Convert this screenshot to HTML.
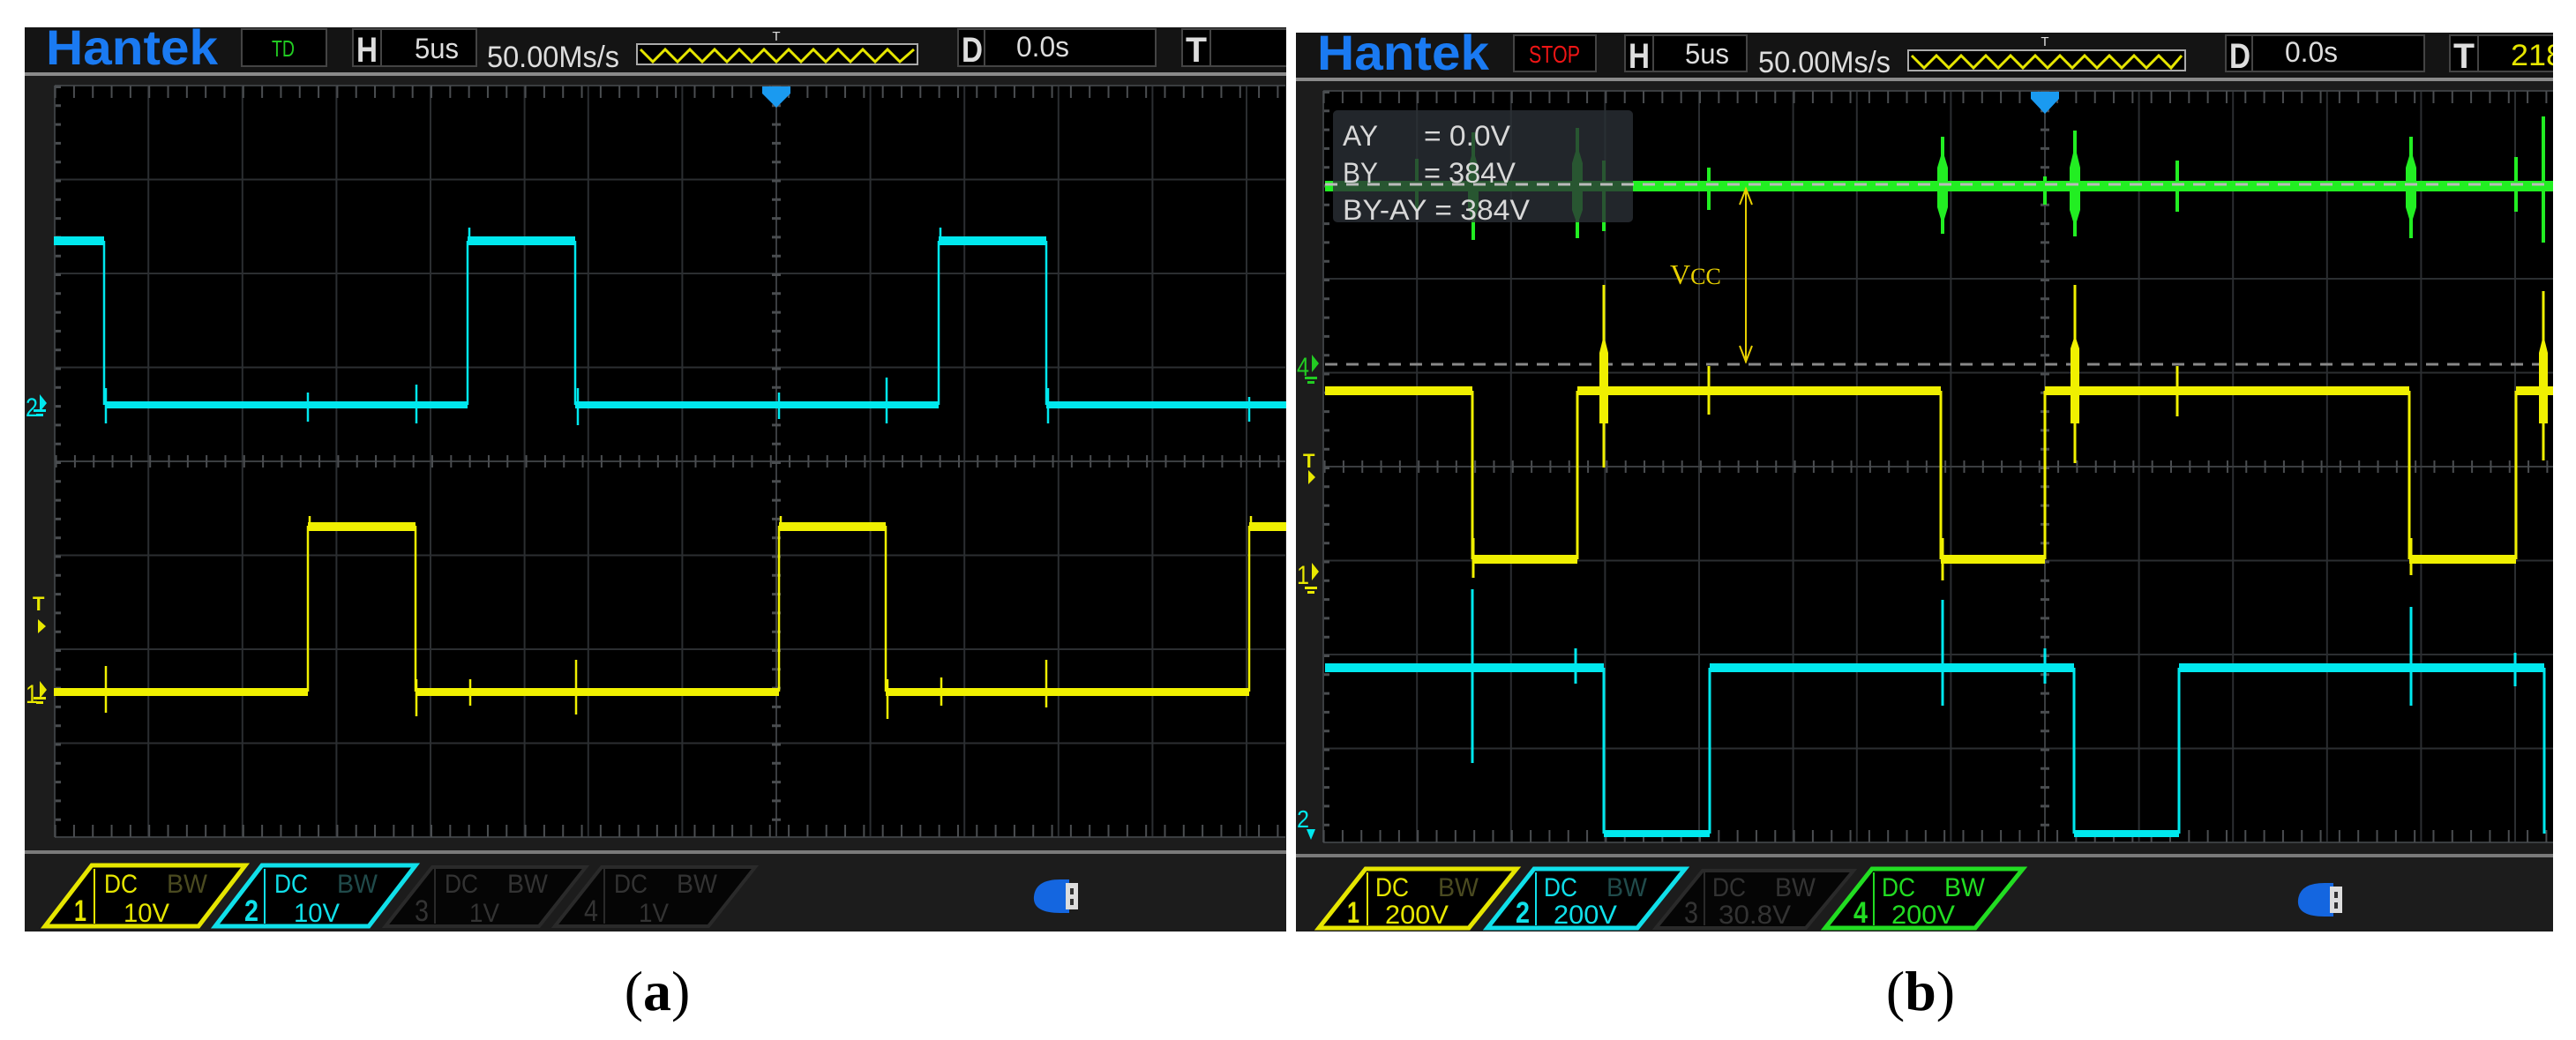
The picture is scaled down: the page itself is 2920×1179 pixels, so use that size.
<!DOCTYPE html>
<html><head><meta charset="utf-8"><style>html,body{margin:0;padding:0;background:#fff}svg{display:block}</style></head>
<body>
<svg width="2920" height="1179" viewBox="0 0 2920 1179" xmlns="http://www.w3.org/2000/svg" font-family="'Liberation Sans Narrow','Liberation Sans',sans-serif">
<defs>
<clipPath id="ca"><rect x="28" y="31" width="1430" height="1025"/></clipPath>
<clipPath id="cb"><rect x="1469" y="37" width="1425" height="1019"/></clipPath>
<g id="grid">
  <rect x="-818" y="-426" width="1395" height="852" fill="#000"/>
  <g stroke="#2b2e31" stroke-width="2">
    <line x1="-711.8" y1="-426" x2="-711.8" y2="426"/><line x1="-605.2" y1="-426" x2="-605.2" y2="426"/>
    <line x1="-498.6" y1="-426" x2="-498.6" y2="426"/><line x1="-392" y1="-426" x2="-392" y2="426"/>
    <line x1="-285.4" y1="-426" x2="-285.4" y2="426"/>
    <line x1="-213.2" y1="-426" x2="-213.2" y2="426"/><line x1="-106.6" y1="-426" x2="-106.6" y2="426"/>
    <line x1="106.6" y1="-426" x2="106.6" y2="426"/><line x1="213.2" y1="-426" x2="213.2" y2="426"/>
    <line x1="319.8" y1="-426" x2="319.8" y2="426"/><line x1="426.4" y1="-426" x2="426.4" y2="426"/>
    <line x1="533" y1="-426" x2="533" y2="426"/>
    <line x1="-818" y1="-319.5" x2="577" y2="-319.5"/><line x1="-818" y1="-213" x2="577" y2="-213"/>
    <line x1="-818" y1="-106.5" x2="577" y2="-106.5"/><line x1="-818" y1="106.5" x2="577" y2="106.5"/>
    <line x1="-818" y1="213" x2="577" y2="213"/><line x1="-818" y1="319.5" x2="577" y2="319.5"/>
  </g>
  <g stroke="#3a3d40" stroke-width="2">
    <line x1="-818" y1="0" x2="577" y2="0"/><line x1="0" y1="-426" x2="0" y2="426"/>
    <line x1="-818" y1="-426" x2="577" y2="-426"/><line x1="-818" y1="426" x2="577" y2="426"/>
    <line x1="-818" y1="-426" x2="-818" y2="426"/>
  </g>
  <g stroke="#4a4d50" stroke-width="2" stroke-dasharray="2 19.32">
    <line x1="-818.4" y1="0" x2="577" y2="0" stroke-width="14" stroke-dashoffset="-1"/>
    <line x1="-818.4" y1="-419" x2="577" y2="-419" stroke-width="14"/>
    <line x1="-818.4" y1="419" x2="577" y2="419" stroke-width="14"/>
  </g>
  <g stroke="#4a4d50" stroke-dasharray="3 18.3">
    <line x1="0" y1="-426" x2="0" y2="426" stroke-width="10"/>
    <line x1="-814" y1="-426" x2="-814" y2="426" stroke-width="6"/>
  </g>
</g>
</defs>

<!-- ================= PANEL A ================= -->
<g clip-path="url(#ca)">
  <rect x="28" y="31" width="1430" height="1025" fill="#1c1c1c"/>
  <rect x="28" y="31" width="1430" height="51" fill="#141414"/>
  <rect x="28" y="82" width="1430" height="4" fill="#8a8a8a"/>
  <use href="#grid" transform="translate(880,523)"/>
  <text x="52" y="73" font-size="56" font-weight="bold" fill="#1a7af2" textLength="195" lengthAdjust="spacingAndGlyphs">Hantek</text>
  <rect x="274" y="33" width="96" height="42" fill="#000" stroke="#444" stroke-width="2"/>
  <text x="308" y="64" font-size="26" fill="#22cc22" textLength="26" lengthAdjust="spacingAndGlyphs">TD</text>
  <rect x="400" y="33" width="140" height="42" fill="#000" stroke="#444" stroke-width="2"/>
  <line x1="432" y1="33" x2="432" y2="75" stroke="#444" stroke-width="2"/>
  <text x="404" y="70" font-size="40" font-weight="bold" fill="#ddd" textLength="24" lengthAdjust="spacingAndGlyphs">H</text>
  <text x="470" y="66" font-size="32" fill="#ddd" textLength="50" lengthAdjust="spacingAndGlyphs">5us</text>
  <text x="552" y="76" font-size="34" fill="#ddd" textLength="150" lengthAdjust="spacingAndGlyphs">50.00Ms/s</text>
  <rect x="722" y="50" width="318" height="23" fill="#000" stroke="#aaa" stroke-width="2"/>
  <polyline points="726,56 740,70 754,56 768,70 782,56 796,70 810,56 824,70 838,56 852,70 866,56 880,70 894,56 908,70 922,56 936,70 950,56 964,70 978,56 992,70 1006,56 1020,70 1036,56" fill="none" stroke="#e6e600" stroke-width="3"/>
  <text x="880" y="46" font-size="15" fill="#ddd" text-anchor="middle">T</text>
  <rect x="1086" y="33" width="224" height="42" fill="#000" stroke="#444" stroke-width="2"/>
  <line x1="1116" y1="33" x2="1116" y2="75" stroke="#444" stroke-width="2"/>
  <text x="1090" y="70" font-size="40" font-weight="bold" fill="#ddd" textLength="24" lengthAdjust="spacingAndGlyphs">D</text>
  <text x="1152" y="64" font-size="32" fill="#ddd" textLength="60" lengthAdjust="spacingAndGlyphs">0.0s</text>
  <rect x="1340" y="33" width="140" height="42" fill="#000" stroke="#444" stroke-width="2"/>
  <line x1="1372" y1="33" x2="1372" y2="75" stroke="#444" stroke-width="2"/>
  <text x="1344" y="70" font-size="40" font-weight="bold" fill="#ddd" textLength="24" lengthAdjust="spacingAndGlyphs">T</text>
  <polygon points="864,98 896,98 896,106 880,122 864,106" fill="#1a9af0"/>
  <g fill="#00e8ee">
    <rect x="61" y="268" width="57" height="10"/><rect x="530" y="268" width="122" height="10"/><rect x="1064" y="268" width="122" height="10"/>
    <rect x="120" y="455" width="410" height="8"/><rect x="652" y="455" width="412" height="8"/><rect x="1186" y="455" width="272" height="8"/>
  </g>
  <path d="M118,273 V459 M530,273 V459 M652,273 V459 M1064,273 V459 M1186,273 V459 M120,440 V480 M349,445 V478 M472,436 V480 M655,440 V482 M883,445 V475 M1005,428 V480 M1188,440 V480 M1416,450 V478 M532,258 V275 M1066,258 V275" stroke="#00e8ee" stroke-width="2.5" fill="none"/>
  <g fill="#f0f000">
    <rect x="349" y="592" width="122" height="10"/><rect x="883" y="592" width="121" height="10"/><rect x="1416" y="592" width="42" height="10"/>
    <rect x="61" y="780" width="288" height="9"/><rect x="471" y="780" width="412" height="9"/><rect x="1004" y="780" width="412" height="9"/>
  </g>
  <path d="M349,596 V784 M471,596 V784 M883,596 V784 M1004,596 V784 M1416,596 V784 M120,755 V808 M472,770 V812 M653,748 V810 M1006,770 V815 M1186,748 V802 M533,770 V800 M1067,768 V800 M351,585 V598 M885,585 V598 M1418,585 V598" stroke="#f0f000" stroke-width="2.5" fill="none"/>
  <text x="29" y="472" font-size="30" fill="#00e8ee" textLength="14" lengthAdjust="spacingAndGlyphs">2</text>
  <polygon points="45,447 53,457 45,467" fill="#00e8ee"/>
  <rect x="38" y="464" width="14" height="3" fill="#00e8ee"/><rect x="41" y="469" width="8" height="3" fill="#00e8ee"/>
  <text x="29" y="797" font-size="30" fill="#e8e800" textLength="14" lengthAdjust="spacingAndGlyphs">1</text>
  <polygon points="45,772 53,782 45,792" fill="#e8e800"/>
  <rect x="38" y="790" width="14" height="3" fill="#e8e800"/><rect x="41" y="795" width="8" height="3" fill="#e8e800"/>
  <text x="37" y="692" font-size="22" fill="#e8e800" font-weight="bold">T</text>
  <polygon points="43,702 52,710 43,718" fill="#e8e800"/>
  <rect x="28" y="964" width="1430" height="4" fill="#7a7a7a"/>
  <g font-size="30">
    <polygon points="104,981 278,981 225,1050 51,1050" fill="#000" stroke="#e6e600" stroke-width="5"/>
    <line x1="107" y1="985" x2="107" y2="1047" stroke="#e6e600" stroke-width="2"/>
    <text x="84" y="1044" font-size="34" font-weight="bold" fill="#e6e600" textLength="14" lengthAdjust="spacingAndGlyphs">1</text>
    <text x="118" y="1012" fill="#e6e600" textLength="38" lengthAdjust="spacingAndGlyphs">DC</text><text x="189" y="1012" fill="#4a4a20" textLength="46" lengthAdjust="spacingAndGlyphs">BW</text>
    <text x="140" y="1045" fill="#e6e600" textLength="52" lengthAdjust="spacingAndGlyphs">10V</text>
    <polygon points="297,981 471,981 418,1050 244,1050" fill="#000" stroke="#10e0ea" stroke-width="5"/>
    <line x1="300" y1="985" x2="300" y2="1047" stroke="#10e0ea" stroke-width="2"/>
    <text x="277" y="1044" font-size="34" font-weight="bold" fill="#10e0ea" textLength="16" lengthAdjust="spacingAndGlyphs">2</text>
    <text x="311" y="1012" fill="#10e0ea" textLength="38" lengthAdjust="spacingAndGlyphs">DC</text><text x="382" y="1012" fill="#204a4a" textLength="46" lengthAdjust="spacingAndGlyphs">BW</text>
    <text x="333" y="1045" fill="#10e0ea" textLength="52" lengthAdjust="spacingAndGlyphs">10V</text>
    <polygon points="490,983 664,983 611,1050 437,1050" fill="#050505" stroke="#2a2a2a" stroke-width="4"/>
    <line x1="493" y1="985" x2="493" y2="1047" stroke="#2a2a2a" stroke-width="2"/>
    <text x="470" y="1044" font-size="34" fill="#333" textLength="16" lengthAdjust="spacingAndGlyphs">3</text>
    <text x="504" y="1012" fill="#333" textLength="38" lengthAdjust="spacingAndGlyphs">DC</text><text x="575" y="1012" fill="#333" textLength="46" lengthAdjust="spacingAndGlyphs">BW</text>
    <text x="532" y="1045" fill="#333" textLength="34" lengthAdjust="spacingAndGlyphs">1V</text>
    <polygon points="682,983 856,983 803,1050 629,1050" fill="#050505" stroke="#2a2a2a" stroke-width="4"/>
    <line x1="685" y1="985" x2="685" y2="1047" stroke="#2a2a2a" stroke-width="2"/>
    <text x="662" y="1044" font-size="34" fill="#333" textLength="16" lengthAdjust="spacingAndGlyphs">4</text>
    <text x="696" y="1012" fill="#333" textLength="38" lengthAdjust="spacingAndGlyphs">DC</text><text x="767" y="1012" fill="#333" textLength="46" lengthAdjust="spacingAndGlyphs">BW</text>
    <text x="724" y="1045" fill="#333" textLength="34" lengthAdjust="spacingAndGlyphs">1V</text>
  </g>
  <path d="M1202,997 H1212 V1035 H1202 Q1170,1035 1172,1016 Q1174,997 1202,997 Z" fill="#1466e0"/>
  <rect x="1208" y="1001" width="14" height="30" fill="#ddd"/>
  <rect x="1213" y="1007" width="4" height="7" fill="#333"/><rect x="1213" y="1019" width="4" height="7" fill="#333"/>
</g>

<!-- ================= PANEL B ================= -->
<g clip-path="url(#cb)">
  <rect x="1469" y="37" width="1425" height="1019" fill="#1c1c1c"/>
  <rect x="1469" y="37" width="1425" height="51" fill="#141414"/>
  <rect x="1469" y="88" width="1425" height="4" fill="#8a8a8a"/>
  <use href="#grid" transform="translate(2318,529)"/>
  <text x="1493" y="79" font-size="56" font-weight="bold" fill="#1a7af2" textLength="195" lengthAdjust="spacingAndGlyphs">Hantek</text>
  <rect x="1716" y="40" width="93" height="41" fill="#000" stroke="#444" stroke-width="2"/>
  <text x="1733" y="71" font-size="28" fill="#ee1515" textLength="58" lengthAdjust="spacingAndGlyphs">STOP</text>
  <rect x="1842" y="40" width="138" height="41" fill="#000" stroke="#444" stroke-width="2"/>
  <line x1="1874" y1="40" x2="1874" y2="81" stroke="#444" stroke-width="2"/>
  <text x="1846" y="77" font-size="40" font-weight="bold" fill="#ddd" textLength="24" lengthAdjust="spacingAndGlyphs">H</text>
  <text x="1910" y="72" font-size="32" fill="#ddd" textLength="50" lengthAdjust="spacingAndGlyphs">5us</text>
  <text x="1993" y="82" font-size="34" fill="#ddd" textLength="150" lengthAdjust="spacingAndGlyphs">50.00Ms/s</text>
  <rect x="2163" y="57" width="314" height="23" fill="#000" stroke="#aaa" stroke-width="2"/>
  <polyline points="2167,63 2181,77 2195,63 2209,77 2223,63 2237,77 2251,63 2265,77 2279,63 2293,77 2307,63 2321,77 2335,63 2349,77 2363,63 2377,77 2391,63 2405,77 2419,63 2433,77 2447,63 2461,77 2473,63" fill="none" stroke="#e6e600" stroke-width="3"/>
  <text x="2318" y="52" font-size="15" fill="#ddd" text-anchor="middle">T</text>
  <rect x="2523" y="40" width="225" height="41" fill="#000" stroke="#444" stroke-width="2"/>
  <line x1="2553" y1="40" x2="2553" y2="81" stroke="#444" stroke-width="2"/>
  <text x="2527" y="77" font-size="40" font-weight="bold" fill="#ddd" textLength="24" lengthAdjust="spacingAndGlyphs">D</text>
  <text x="2590" y="70" font-size="32" fill="#ddd" textLength="60" lengthAdjust="spacingAndGlyphs">0.0s</text>
  <rect x="2777" y="40" width="140" height="41" fill="#000" stroke="#444" stroke-width="2"/>
  <line x1="2809" y1="40" x2="2809" y2="81" stroke="#444" stroke-width="2"/>
  <text x="2781" y="77" font-size="40" font-weight="bold" fill="#ddd" textLength="24" lengthAdjust="spacingAndGlyphs">T</text>
  <text x="2846" y="74" font-size="34" fill="#e6e600" textLength="60" lengthAdjust="spacingAndGlyphs">218</text>
  <polygon points="2302,104 2334,104 2334,112 2318,129 2302,112" fill="#1a9af0"/>
  <rect x="1502" y="205" width="1392" height="12" fill="#22ee22"/>
  <path d="M1670,150 V272 M1788,145 V270 M1818,182 V262 M1937,190 V238 M2202,155 V265 M2318,200 V232 M2352,148 V268 M2468,182 V240 M2733,155 V270 M2852,178 V240 M2883,132 V275 M1606,180 V240" stroke="#22ee22" stroke-width="4" fill="none"/>
  <path d="M1664,190 L1670,170 L1676,190 V235 L1670,255 L1664,235Z M1782,185 L1788,165 L1794,185 V238 L1788,255 L1782,238Z M2196,190 L2202,170 L2208,190 V235 L2202,255 L2196,235Z M2346,190 L2352,165 L2358,190 V238 L2352,258 L2346,238Z M2727,190 L2733,170 L2739,190 V235 L2733,255 L2727,235Z" fill="#22ee22"/>
  <rect x="1511" y="125" width="340" height="127" rx="5" fill="#2a3036" fill-opacity="0.8"/>
  <g font-size="32" fill="#d8d8d8">
    <text x="1522" y="165" textLength="40" lengthAdjust="spacingAndGlyphs">AY</text><text x="1614" y="165" textLength="98" lengthAdjust="spacingAndGlyphs">= 0.0V</text>
    <text x="1522" y="207" textLength="40" lengthAdjust="spacingAndGlyphs">BY</text><text x="1614" y="207" textLength="104" lengthAdjust="spacingAndGlyphs">= 384V</text>
    <text x="1522" y="249" textLength="212" lengthAdjust="spacingAndGlyphs">BY-AY = 384V</text>
  </g>
  <line x1="1502" y1="209" x2="2894" y2="209" stroke="#bbb" stroke-width="3" stroke-dasharray="14 10"/>
  <line x1="1502" y1="413" x2="2894" y2="413" stroke="#888" stroke-width="3" stroke-dasharray="14 10"/>
  <g fill="#f0f000">
    <rect x="1502" y="438" width="167" height="10"/><rect x="1788" y="438" width="412" height="10"/><rect x="2318" y="438" width="413" height="10"/><rect x="2852" y="438" width="42" height="10"/>
    <rect x="1669" y="629" width="119" height="10"/><rect x="2200" y="629" width="118" height="10"/><rect x="2731" y="629" width="121" height="10"/>
  </g>
  <path d="M1669,443 V634 M1788,443 V634 M2200,443 V634 M2318,443 V634 M2731,443 V634 M2852,443 V634 M1818,323 V530 M2352,323 V525 M2883,330 V522 M1937,415 V470 M2468,415 V472 M1670,610 V655 M2202,610 V658 M2733,610 V652" stroke="#f0f000" stroke-width="3" fill="none"/>
  <path d="M1813,400 L1818,380 L1823,400 L1823,480 L1813,480 Z M2347,395 L2352,380 L2357,395 L2357,480 L2347,480 Z M2878,400 L2883,380 L2888,400 V480 H2878Z" fill="#f0f000"/>
  <line x1="1979" y1="213" x2="1979" y2="411" stroke="#e8d000" stroke-width="2"/>
  <path d="M1972,232 L1979,214 L1986,232 M1972,392 L1979,410 L1986,392" stroke="#e8d000" stroke-width="2" fill="none"/>
  <text x="1893" y="322" font-family="'Liberation Serif',serif" font-size="32" fill="#e8d000">V<tspan font-size="26">CC</tspan></text>
  <g fill="#00e8ee">
    <rect x="1502" y="752" width="316" height="10"/><rect x="1938" y="752" width="413" height="10"/><rect x="2470" y="752" width="414" height="10"/>
    <rect x="1818" y="941" width="120" height="8"/><rect x="2351" y="941" width="119" height="8"/>
  </g>
  <path d="M1818,757 V945 M1938,757 V945 M2351,757 V945 M2470,757 V945 M2884,757 V945 M1669,668 V865 M2202,680 V800 M2733,688 V800 M1786,735 V775 M2318,735 V775 M2851,740 V778" stroke="#00e8ee" stroke-width="3" fill="none"/>
  <text x="1470" y="426" font-size="30" fill="#22cc22" textLength="14" lengthAdjust="spacingAndGlyphs">4</text>
  <polygon points="1487,402 1495,412 1487,422" fill="#22cc22"/>
  <rect x="1479" y="427" width="14" height="3" fill="#22cc22"/><rect x="1482" y="432" width="8" height="3" fill="#22cc22"/>
  <text x="1470" y="662" font-size="30" fill="#e8e800" textLength="14" lengthAdjust="spacingAndGlyphs">1</text>
  <polygon points="1487,638 1495,648 1487,658" fill="#e8e800"/>
  <rect x="1479" y="665" width="14" height="3" fill="#e8e800"/><rect x="1482" y="670" width="8" height="3" fill="#e8e800"/>
  <text x="1477" y="530" font-size="22" fill="#e8e800" font-weight="bold">T</text>
  <polygon points="1483,533 1491,541 1483,549" fill="#e8e800"/>
  <text x="1470" y="938" font-size="28" fill="#00e8ee" textLength="14" lengthAdjust="spacingAndGlyphs">2</text>
  <polygon points="1481,940 1491,940 1486,952" fill="#00e8ee"/>
  <rect x="1469" y="968" width="1425" height="4" fill="#7a7a7a"/>
  <g font-size="30">
    <polygon points="1548,985 1719,985 1665,1052 1495,1052" fill="#000" stroke="#e6e600" stroke-width="5"/>
    <line x1="1550" y1="989" x2="1550" y2="1049" stroke="#e6e600" stroke-width="2"/>
    <text x="1527" y="1046" font-size="34" font-weight="bold" fill="#e6e600" textLength="14" lengthAdjust="spacingAndGlyphs">1</text>
    <text x="1559" y="1016" fill="#e6e600" textLength="38" lengthAdjust="spacingAndGlyphs">DC</text><text x="1630" y="1016" fill="#4a4a20" textLength="46" lengthAdjust="spacingAndGlyphs">BW</text>
    <text x="1570" y="1047" fill="#e6e600" textLength="72" lengthAdjust="spacingAndGlyphs">200V</text>
    <polygon points="1739,985 1910,985 1856,1052 1686,1052" fill="#000" stroke="#10e0ea" stroke-width="5"/>
    <line x1="1741" y1="989" x2="1741" y2="1049" stroke="#10e0ea" stroke-width="2"/>
    <text x="1718" y="1046" font-size="34" font-weight="bold" fill="#10e0ea" textLength="16" lengthAdjust="spacingAndGlyphs">2</text>
    <text x="1750" y="1016" fill="#10e0ea" textLength="38" lengthAdjust="spacingAndGlyphs">DC</text><text x="1821" y="1016" fill="#204a4a" textLength="46" lengthAdjust="spacingAndGlyphs">BW</text>
    <text x="1761" y="1047" fill="#10e0ea" textLength="72" lengthAdjust="spacingAndGlyphs">200V</text>
    <polygon points="1930,987 2101,987 2047,1052 1877,1052" fill="#050505" stroke="#2a2a2a" stroke-width="4"/>
    <line x1="1932" y1="989" x2="1932" y2="1049" stroke="#2a2a2a" stroke-width="2"/>
    <text x="1909" y="1046" font-size="34" fill="#333" textLength="16" lengthAdjust="spacingAndGlyphs">3</text>
    <text x="1941" y="1016" fill="#333" textLength="38" lengthAdjust="spacingAndGlyphs">DC</text><text x="2012" y="1016" fill="#333" textLength="46" lengthAdjust="spacingAndGlyphs">BW</text>
    <text x="1948" y="1047" fill="#333" textLength="82" lengthAdjust="spacingAndGlyphs">30.8V</text>
    <polygon points="2122,985 2293,985 2239,1052 2069,1052" fill="#000" stroke="#22dd22" stroke-width="5"/>
    <line x1="2124" y1="989" x2="2124" y2="1049" stroke="#22dd22" stroke-width="2"/>
    <text x="2101" y="1046" font-size="34" font-weight="bold" fill="#22dd22" textLength="16" lengthAdjust="spacingAndGlyphs">4</text>
    <text x="2133" y="1016" fill="#22dd22" textLength="38" lengthAdjust="spacingAndGlyphs">DC</text><text x="2204" y="1016" fill="#22dd22" textLength="46" lengthAdjust="spacingAndGlyphs">BW</text>
    <text x="2144" y="1047" fill="#22dd22" textLength="72" lengthAdjust="spacingAndGlyphs">200V</text>
  </g>
  <path d="M2635,1001 H2645 V1039 H2635 Q2603,1039 2605,1020 Q2607,1001 2635,1001 Z" fill="#1466e0"/>
  <rect x="2641" y="1005" width="14" height="30" fill="#ddd"/>
  <rect x="2646" y="1011" width="4" height="7" fill="#333"/><rect x="2646" y="1023" width="4" height="7" fill="#333"/>
</g>

<text x="745" y="1145" font-family="'Liberation Serif',serif" font-size="64" text-anchor="middle" fill="#000">(<tspan font-weight="bold">a</tspan>)</text>
<text x="2177" y="1145" font-family="'Liberation Serif',serif" font-size="64" text-anchor="middle" fill="#000">(<tspan font-weight="bold">b</tspan>)</text>
</svg>
</body></html>
